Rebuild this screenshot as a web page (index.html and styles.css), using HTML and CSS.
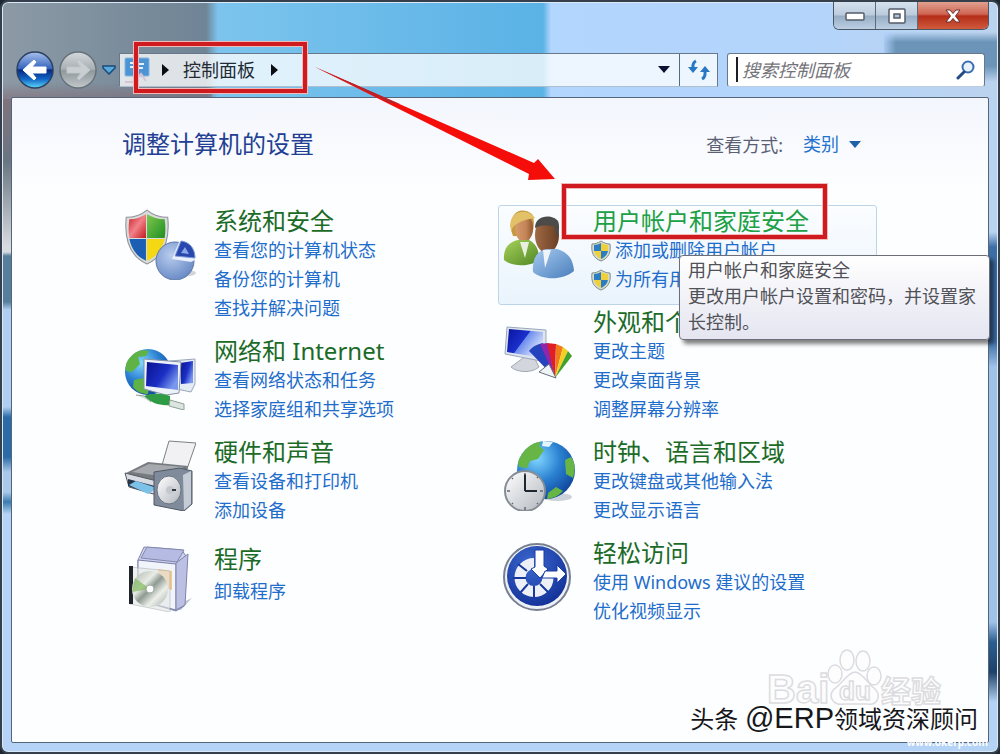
FILE: index.html
```html
<!DOCTYPE html>
<html lang="zh-CN">
<head>
<meta charset="utf-8">
<meta name="viewport" content="width=device-width, initial-scale=1">
<title>控制面板</title>
<link rel="stylesheet" href="styles.css">
</head>
<body>
<svg class="defs" aria-hidden="true">
  <defs>
    <linearGradient id="red" x1="0" y1="0" x2="1" y2="1"><stop offset="0" stop-color="#c51f25"/><stop offset=".5" stop-color="#f2828a"/><stop offset="1" stop-color="#c3161d"/></linearGradient>
    <linearGradient id="green" x1="0" y1="0" x2="1" y2="1"><stop offset="0" stop-color="#7fc84e"/><stop offset="1" stop-color="#1f8f23"/></linearGradient>
    <radialGradient id="globe" cx=".35" cy=".3" r=".8"><stop offset="0" stop-color="#7fd6ff"/><stop offset=".5" stop-color="#2a80d0"/><stop offset="1" stop-color="#0b3e96"/></radialGradient>
    <linearGradient id="screen" x1="0" y1="0" x2="1" y2=".6"><stop offset="0" stop-color="#0a14a0"/><stop offset=".5" stop-color="#1b30cc"/><stop offset=".52" stop-color="#6c8cec"/><stop offset="1" stop-color="#dfe9ff"/></linearGradient>
    <linearGradient id="screen-dark" x1="0" y1="0" x2="1" y2=".6"><stop offset="0" stop-color="#0a1290"/><stop offset=".6" stop-color="#1a2fc4"/><stop offset="1" stop-color="#7a97ee"/></linearGradient>
    <linearGradient id="metal" x1="0" y1="0" x2="1" y2="1"><stop offset="0" stop-color="#ffffff"/><stop offset="1" stop-color="#b2b7be"/></linearGradient>
    <radialGradient id="pie" cx=".4" cy=".35" r=".7"><stop offset="0" stop-color="#b9cdee"/><stop offset="1" stop-color="#6688c4"/></radialGradient>
    <linearGradient id="skin1" x1="0" y1="0" x2="1" y2="0"><stop offset="0" stop-color="#d79a6d"/><stop offset=".6" stop-color="#c48658"/><stop offset="1" stop-color="#905530"/></linearGradient>
    <linearGradient id="skin2" x1="0" y1="0" x2="1" y2="0"><stop offset="0" stop-color="#a06a45"/><stop offset="1" stop-color="#6a3e22"/></linearGradient>
    <linearGradient id="shirt1" x1="0" y1="0" x2="1" y2="1"><stop offset="0" stop-color="#a9d15a"/><stop offset="1" stop-color="#4e8724"/></linearGradient>
    <linearGradient id="shirt2" x1="0" y1="0" x2="1" y2="1"><stop offset="0" stop-color="#a5c9f0"/><stop offset="1" stop-color="#4a7ebb"/></linearGradient>
    <radialGradient id="access" cx=".4" cy=".3" r=".8"><stop offset="0" stop-color="#3d69d0"/><stop offset="1" stop-color="#0e2c93"/></radialGradient>
    <linearGradient id="back" x1="0" y1="0" x2="0" y2="1"><stop offset="0" stop-color="#a9c1ec"/><stop offset=".46" stop-color="#3564bd"/><stop offset=".5" stop-color="#07297f"/><stop offset=".75" stop-color="#1065c6"/><stop offset="1" stop-color="#5fd8fa"/></linearGradient>
    <linearGradient id="forward" x1="0" y1="0" x2="0" y2="1"><stop offset="0" stop-color="#d3d8db"/><stop offset=".48" stop-color="#a8afb3"/><stop offset=".52" stop-color="#8f989c"/><stop offset="1" stop-color="#c3c8ca"/></linearGradient>
    <linearGradient id="disc" x1="0" y1="0" x2="1" y2="1"><stop offset="0" stop-color="#a6b3a8"/><stop offset=".35" stop-color="#e8ece4"/><stop offset=".5" stop-color="#8e9a92"/><stop offset=".7" stop-color="#eef0ea"/><stop offset="1" stop-color="#9ea7a2"/></linearGradient>
    <symbol id="shield" viewBox="0 0 44 54">
      <path d="M22 1C16 6 9 8 2 8 0 28 4 45 22 53 40 45 44 28 42 8 35 8 28 6 22 1Z" fill="#d9dcdc" stroke="#8d9396"/>
      <path d="M21 5C16 8 11 10 5 10 4 17 4 22 5 28H21Z" fill="url(#red)"/>
      <path d="M22 5C27 8 33 10 39 10 40 17 40 22 39 28H22Z" fill="url(#green)"/>
      <path d="M5 29H21V50C11 45 7 38 5 29Z" fill="#1b5fb4"/>
      <path d="M22 29H39C37 38 32 46 22 50Z" fill="#f3d813"/>
    </symbol>
    <symbol id="uac" viewBox="0 0 20 22">
      <path d="M10 1C7 3 4 4 1 4 0 12 2 18 10 21 18 18 20 12 19 4 16 4 13 3 10 1Z" fill="#d6dcc8" stroke="#7f8c91"/>
      <path d="M10 3C8 4 5 5 3 5V11H10Z" fill="#2b7dc3"/><path d="M10 3C12 4 15 5 17 5V11H10Z" fill="#f0cf3d"/>
      <path d="M3 11H10V19C6 17 4 15 3 11Z" fill="#f0cf3d"/><path d="M10 11H17C16 15 14 17 10 19Z" fill="#2b7dc3"/>
    </symbol>
  </defs>
</svg>

<div class="window">
  <header class="titlebar">
    <div class="caption">
      <button class="cap" type="button" aria-label="最小化"><svg width="20" height="10" viewBox="0 0 20 10"><rect x="1" y="2" width="18" height="7" rx="1" fill="#fff" stroke="#535c6b" stroke-width="1.5"/></svg></button>
      <button class="cap" type="button" aria-label="最大化"><svg width="18" height="16" viewBox="0 0 18 16"><rect x="1" y="1" width="16" height="14" rx="1" fill="#fff" stroke="#535c6b" stroke-width="1.5"/><rect x="6" y="6" width="6" height="4" fill="#b2c3db" stroke="#535c6b" stroke-width="1.5"/></svg></button>
      <button class="cap cap-close" type="button" aria-label="关闭"><svg width="16" height="14" viewBox="0 0 16 14"><path d="M1 1H5L8 4.500 11 1H15L10.500 7 15 13H11L8 9.500 5 13H1L5.500 7Z" fill="#fff" stroke="#6b3131"/></svg></button>
    </div>
  </header>

  <div class="navbar">
    <div class="history">
      <button class="round" type="button" aria-label="后退"><svg width="38" height="38" viewBox="0 0 38 38"><circle cx="19" cy="19" r="18" fill="url(#back)" stroke="#2c405f" stroke-width="1.500"/><path d="M7 19 18 9 20 11 16 16H30V22H16L20 27 18 29Z" fill="#fff" stroke="#fff" stroke-linejoin="round"/></svg></button>
      <button class="round" type="button" aria-label="前进"><svg width="38" height="38" viewBox="0 0 38 38"><circle cx="19" cy="19" r="18" fill="url(#forward)" stroke="#66727b" stroke-width="1.500"/><path d="M31 19 20 9 18 11 22 16H8V22H22L18 27 20 29Z" fill="#c9ced0" stroke="#c0c6c9" stroke-linejoin="round"/></svg></button>
      <button class="recent" type="button" aria-label="最近的页面"><svg width="14" height="10" viewBox="0 0 14 10"><path d="M1 1H13V3L7 9 1 3Z" fill="#5aa9dc" stroke="#174c78" stroke-width="1.500"/></svg></button>
    </div>
    <nav class="address" aria-label="地址">
      <svg class="place" width="26" height="28" viewBox="0 0 26 28"><rect x="1" y="2" width="24" height="18" rx="1" fill="#4d94d4" stroke="#86b5de"/><path d="M6 7H10M6 11H11M14 8H20M14 12H19" stroke="#e4f2ff" stroke-width="2"/><path d="M1 26H10M12 24 17 18 22 25" stroke="#d4c4d4" stroke-width="2" fill="none"/></svg>
      <svg width="7" height="12" viewBox="0 0 7 12"><path d="M0 0 7 6 0 12Z" fill="#0b0d12"/></svg>
      <a class="crumb" href="#">控制面板</a>
      <svg class="crumb-next" width="7" height="12" viewBox="0 0 7 12"><path d="M0 0 7 6 0 12Z" fill="#0b0d12"/></svg>
      <button class="drop" type="button" aria-label="以前的位置"><svg width="12" height="7" viewBox="0 0 12 7"><path d="M0 0H12L6 7Z" fill="#0c1230"/></svg></button>
      <button class="refresh" type="button" aria-label="刷新"><svg width="22" height="22" viewBox="0 0 22 22"><path d="M8 2C4 4 5 7 5 9M14 20C18 18 17 15 17 12" fill="none" stroke="#2678c4" stroke-width="3"/><path d="M0 8H10L5 14ZM12 13H22L17 7Z" fill="#2678c4"/></svg></button>
    </nav>
    <label class="search">
      <span class="caret"></span>
      <input class="search-input" type="text" placeholder="搜索控制面板" aria-label="搜索控制面板">
      <svg width="20" height="20" viewBox="0 0 20 20"><circle cx="12" cy="7" r="5.500" fill="#e7f1fc" stroke="#3a6db0" stroke-width="2"/><path d="M8 12 2 18" stroke="#244a84" stroke-width="3" stroke-linecap="round"/></svg>
    </label>
  </div>

  <main class="panel">
    <div class="heading">
      <h1 class="title">调整计算机的设置</h1>
      <div class="view">
        <label class="view-label" for="view">查看方式:</label>
        <span class="view-pick"><select class="view-select" id="view"><option>类别</option></select><svg width="12" height="7" viewBox="0 0 12 7"><path d="M0 0H12L6 7Z" fill="#1d62a8"/></svg></span>
      </div>
    </div>

    <div class="columns">
      <div class="column">
        <section class="category">
          <svg class="icon" viewBox="0 0 72 74"><ellipse cx="55" cy="67" rx="17" ry="4" fill="#d0d5dc"/><use href="#shield" x="0" y="3" width="46" height="56"/><circle cx="51" cy="55" r="19" fill="url(#pie)" stroke="#5d77a6"/><path d="M48 53 55 36C64 36 71 44 71 54L67 56Z" fill="#e9effb"/><path d="M51 50 57 35C66 36 71 43 71 52Z" fill="#2848ad" stroke="#7d98dc"/><path d="M57 47 61 41 65 48Z" fill="#8ba7e5"/></svg>
          <div class="text">
            <h2 class="name"><a class="name-link" href="#">系统和安全</a></h2>
            <a class="task" href="#">查看您的计算机状态</a>
            <a class="task" href="#">备份您的计算机</a>
            <a class="task" href="#">查找并解决问题</a>
          </div>
        </section>
        <section class="category">
          <svg class="icon" viewBox="0 0 72 74"><circle cx="24" cy="36" r="23" fill="url(#globe)"/><path d="M4 24C11 15 17 13 25 15L22 20 14 21 16 28 8 36 2 35C1 31 2 27 4 24ZM10 44 20 42 25 51 24 58C18 58 13 56 9 51Z" fill="#5fb345"/><path d="M46 25 71 23V48L67 56 48 52Z" fill="#e4ebf5" stroke="#9ba7b8"/><path d="M56 27 69 25V47L57 48Z" fill="url(#screen-dark)"/><path d="M20 23 57 26 55 57 42 59 20 53Z" fill="#edf2f8" stroke="#8492a7"/><path d="M23 26 54 29V54L22 50Z" fill="url(#screen-dark)"/><path d="M20 60C27 57 38 57 46 60V69C36 70 27 67 20 60Z" fill="#2f9c45"/><path d="M12 59 20 60 27 66M46 64 60 68V74L45 70Z" fill="#dce5e0" stroke="#8da195"/></svg>
          <div class="text">
            <h2 class="name"><a class="name-link" href="#">网络和 Internet</a></h2>
            <a class="task" href="#">查看网络状态和任务</a>
            <a class="task" href="#">选择家庭组和共享选项</a>
          </div>
        </section>
        <section class="category">
          <svg class="icon" viewBox="0 0 72 74"><path d="M45 4 72 6 63 32 38 28Z" fill="#f1f1f4" stroke="#7c8086"/><path d="M2 36 24 25 64 29 61 42 31 48Z" fill="#777b80"/><path d="M8 35 25 27 60 30 36 39Z" fill="#a6aaae"/><path d="M1 36 33 44V58L5 50Z" fill="#d9dde3" stroke="#515961"/><path d="M4 42 31 49 24 56 4 49Z" fill="#26364a"/><path d="M5 48 12 44 33 51 24 57Z" fill="#7cc1e8"/><path d="M30 35 56 31 68 34V67L60 74 30 68Z" fill="#7f8a9b" stroke="#505968"/><path d="M59 38 67 34V67L60 73Z" fill="#c6ccd6"/><ellipse cx="45" cy="53" rx="12" ry="14" fill="url(#metal)" stroke="#6a7380"/><circle cx="46" cy="53" r="4" fill="#c3c8ce"/><path d="M48 53 52 53" stroke="#303840" stroke-width="2"/></svg>
          <div class="text">
            <h2 class="name"><a class="name-link" href="#">硬件和声音</a></h2>
            <a class="task" href="#">查看设备和打印机</a>
            <a class="task" href="#">添加设备</a>
          </div>
        </section>
        <section class="category">
          <svg class="icon" viewBox="0 0 72 74"><path d="M46 70 68 60 57 72Z" fill="#c4c8d1"/><path d="M14 22 20 9 58 12 63 20 60 68 52 73 14 62Z" fill="#cdd1ef" stroke="#8488ac"/><path d="M14 22 52 26V72L14 62Z" fill="#f2f4fc" stroke="#777da6"/><path d="M23 9 60 12 53 24 17 20Z" fill="#b5bbe2" stroke="#8287ad"/><path d="M52 25 64 16 61 67 52 72Z" fill="#bcc1e4" stroke="#7e84ae"/><path d="M34 31 48 33V52L35 49Z" fill="#f5c78c"/><path d="M6 29 46 33V74L6 66Z" fill="#e4e9e6" opacity=".6" stroke="#adb5b3"/><path d="M5 28H9V66H5Z" fill="#20242a"/><circle cx="26" cy="51" r="18" fill="url(#disc)"/><path d="M11 40 26 51 8 54Z" fill="#83ba5f" opacity=".7"/><circle cx="26" cy="51" r="4" fill="#fff" stroke="#9caba2"/></svg>
          <div class="text text-single">
            <h2 class="name"><a class="name-link" href="#">程序</a></h2>
            <a class="task" href="#">卸载程序</a>
          </div>
        </section>
      </div>

      <div class="column">
        <section class="category category-hover">
          <svg class="icon" viewBox="0 0 72 74"><path d="M8 24C6 6 18 0 29 8 32 12 31 26 28 31L10 30Z" fill="#c49a3c"/><ellipse cx="21" cy="22" rx="9" ry="14" fill="url(#skin1)"/><path d="M9 27C7 20 17 14 32 12 28 4 8 1 7 20Z" fill="#e2c168"/><path d="M1 54C0 42 6 36 15 34H26C33 38 36 43 36 54 27 61 9 61 1 54Z" fill="url(#shirt1)"/><path d="M17 36 22 52 26 36Z" fill="#e8efdf"/><ellipse cx="44" cy="29" rx="12" ry="18" fill="url(#skin2)"/><path d="M32 22C32 8 50 8 55 15 57 20 56 27 54 31L51 20C46 20 39 18 32 22Z" fill="#4c4b4a"/><path d="M30 66C29 51 35 45 43 43H54C64 46 70 52 71 65 59 75 39 74 30 66Z" fill="url(#shirt2)"/><path d="M40 44 42 62 48 44Z" fill="#eef4fa"/></svg>
          <div class="text">
            <h2 class="name"><a class="name-link name-link-hot" href="#">用户帐户和家庭安全</a></h2>
            <a class="task" href="#"><svg class="uac" width="20" height="22"><use href="#uac"/></svg>添加或删除用户帐户</a>
            <a class="task" href="#"><svg class="uac" width="20" height="22"><use href="#uac"/></svg>为所有用户</a>
          </div>
        </section>
        <section class="category">
          <svg class="icon" viewBox="0 0 72 74"><path d="M24 48 32 52 36 60C28 67 13 65 8 60Z" fill="#d3d6dc" stroke="#a4a9b2"/><path d="M4 20 43 23V55L2 47Z" fill="#dfe5ec" stroke="#9aa7bb"/><path d="M6 22 40 25V51L4 45Z" fill="url(#screen)"/><path d="M52 71 26 44C30 39 35 37 40 36Z" fill="#2443bd"/><path d="M52 71 37 37 45 36Z" fill="#8e26ae"/><path d="M52 71 44 36 53 37Z" fill="#df1e26"/><path d="M52 71 53 37 60 40Z" fill="#f07b1c"/><path d="M52 71 60 40 65 44Z" fill="#f2cf21"/><path d="M52 71 65 44 69 49Z" fill="#43a02d"/><path d="M36 65 46 57 53 71Z" fill="#f1f4f7" stroke="#66717c"/></svg>
          <div class="text">
            <h2 class="name"><a class="name-link" href="#">外观和个性化</a></h2>
            <a class="task" href="#">更改主题</a>
            <a class="task" href="#">更改桌面背景</a>
            <a class="task" href="#">调整屏幕分辨率</a>
          </div>
        </section>
        <section class="category">
          <svg class="icon" viewBox="0 0 72 74"><ellipse cx="54" cy="60" rx="15" ry="4" fill="#ccd2da"/><circle cx="43" cy="33" r="29" fill="url(#globe)"/><path d="M15 25C20 12 29 5 38 5L36 9 41 13 35 22 27 24 24 31 16 30ZM62 23 68 20C73 27 72 34 70 41L63 37ZM45 56 53 50 60 54C54 60 50 61 44 62Z" fill="#66b545"/><path d="M40 4 50 5 46 10 39 9Z" fill="#e5f5fd"/><circle cx="22" cy="54" r="20" fill="url(#metal)" stroke="#858d96" stroke-width="2"/><path d="M22 54V37M22 54H34" stroke="#1e2731" stroke-width="2"/><path d="M22 36V38M22 70V73M4 54H7M37 54H40M9 41 10 42M34 41 35 40M9 67 10 66M34 66 35 67" stroke="#606a75" stroke-width="1.500"/></svg>
          <div class="text">
            <h2 class="name"><a class="name-link" href="#">时钟、语言和区域</a></h2>
            <a class="task" href="#">更改键盘或其他输入法</a>
            <a class="task" href="#">更改显示语言</a>
          </div>
        </section>
        <section class="category">
          <svg class="icon" viewBox="0 0 72 74"><circle cx="34" cy="39" r="33" fill="#edf0f5" stroke="#777f91" stroke-width="2"/><circle cx="34" cy="38" r="30" fill="url(#access)"/><path d="M31 25.500A14 14 0 1 0 45 40" fill="none" stroke="#edf1f7" stroke-width="11"/><path d="M24 33 15 26M23 40H10M25 46 17 55M31 48V60M37 46 46 55" stroke="#17389e" stroke-width="2"/><path d="M32 12H41V28L45 31 37 40 28 31 32 29Z" fill="#fff" stroke="#1a3da4"/><path d="M42 33H54V27L63 36 54 45V40H39Z" fill="#fff" stroke="#1a3da4"/></svg>
          <div class="text">
            <h2 class="name"><a class="name-link" href="#">轻松访问</a></h2>
            <a class="task" href="#">使用 Windows 建议的设置</a>
            <a class="task" href="#">优化视频显示</a>
          </div>
        </section>
      </div>
    </div>
  </main>

  <div class="tooltip" role="tooltip">用户帐户和家庭安全<br>更改用户帐户设置和密码，并设置家长控制。</div>

  <svg class="marks" width="1000" height="260" viewBox="0 0 1000 260" aria-hidden="true">
    <g fill="none" stroke="#f2b9b9" stroke-width="6"><path d="M136 44H305V91H136Z"/><path d="M564 186H825V237H564Z"/></g>
    <g fill="none" stroke="#cf1b20" stroke-width="4"><path d="M136 44H305V91H136Z"/><path d="M564 186H825V237H564Z"/></g>
    <path d="M315 67 534 163 538 159 555 179 528 180 529 174Z" fill="#f50d0a"/>
    <path d="M315 67 400 104 390 103Z" fill="#b5252b"/>
  </svg>

  <svg class="baidu" width="176" height="66" viewBox="0 0 176 66" role="img" aria-label="Baidu 经验">
    <g fill="#fdfdfd" stroke="#dcdce0" stroke-width="1.500">
      <text class="baidu-text" x="0" y="58">Bai</text>
      <ellipse cx="68" cy="29" rx="7" ry="9"/><ellipse cx="80" cy="15" rx="7" ry="10"/><ellipse cx="96" cy="16" rx="7" ry="10"/><ellipse cx="107" cy="31" rx="7" ry="9"/>
      <path d="M88 27C80 28 75 39 67 44 60 52 67 61 77 59H100C110 61 115 51 108 44 101 39 96 28 88 27Z"/>
      <text class="baidu-small" x="72" y="55">du</text>
      <text class="baidu-cjk" x="114" y="57">经验</text>
    </g>
  </svg>
  <p class="byline">头条 <span class="byline-latin">@ERP</span>领域资深顾问</p>
  <p class="site">www.okerp.com</p>
</div>
</body>
</html>
```
FILE: styles.css
```css
* { box-sizing: border-box; }

body {
  margin: 0;
  background: #1c2733;
  font-family: "Noto Sans", "Noto Sans CJK SC", sans-serif;
  font-size: 18px;
  color: #4c4c55;
}

button {
  margin: 0;
  padding: 0;
  border: 0;
  background: none;
  display: grid;
  place-items: center;
}

a { text-decoration: none; }
svg { display: block; flex: none; }
.defs { position: absolute; width: 0; height: 0; }

.window {
  position: relative;
  display: flex;
  flex-direction: column;
  min-height: 100vh;
  padding: 0 9px 9px;
  border: 2px solid #35404c;
  border-radius: 8px;
  box-shadow: inset 0 0 0 1px #dbe8f5;
  background:
    linear-gradient(90deg, #b3d3fa, #b3d3fa00 14px) 100% 30px / 116px 50px no-repeat,
    linear-gradient(#6f97bb00, #6b94b8 10px 34px, #6f97bb00) 100% 30px / 114px 50px no-repeat,
    linear-gradient(#80687300 80px, #80687380 94px, #80687380 97px) 0 0 / 210px 97px no-repeat,
    linear-gradient(90deg, #8c9aa6, #6f8495 204px, #7cc4ee 216px, #5ab2e5 541px, #b3d6fe 549px, #b3d4fb 80%, #bcd3ee) 0 0 / 100% 97px no-repeat,
    linear-gradient(#b9d4f2 230px, #3e6ea6 245px 340px, #9fc2e8 365px 620px, #2c5d91 640px, #1e4168 670px, #b4d2f3 700px) 100% 0 / 20px 100% no-repeat,
    linear-gradient(#80737c 97px, #6a7682 160px, #d9dcdf 245px, #d9dcdf 250px, #577f9c 254px 300px, #afcff2 308px 405px, #2b6ba8 415px 455px, #a9c9ea 470px 490px, #3a7cb0 500px, #b4d3f7 512px);
}

.titlebar {
  display: flex;
  justify-content: flex-end;
  height: 49px;
}

.caption {
  display: flex;
  height: 28px;
  border: 1px solid #4b5866;
  border-top: 0;
  border-radius: 0 0 6px 6px;
  overflow: hidden;
}

.cap {
  width: 42px;
  border-right: 1px solid #5c6b7c;
  background: linear-gradient(#d5e1ee, #bccbdc 48%, #97adc4 52%, #bccfe3);
}

.cap-close {
  width: 70px;
  border-right: 0;
  background: linear-gradient(#e0a08f, #cf6553 45%, #b42d18 52%, #d05a3c);
}

.navbar {
  display: flex;
  align-items: center;
  height: 37px;
  margin: 0 4px 9px 5px;
}

.history { display: flex; align-items: center; width: 103px; flex: none; }
.round { width: 38px; height: 38px; margin-right: 5px; }
.recent { width: 14px; height: 20px; }

.address {
  flex: 1;
  display: flex;
  align-items: center;
  gap: 12px;
  height: 34px;
  padding-left: 4px;
  border: 1px solid #66788a;
  border-bottom-color: #adbfce;
  background: #ffffffc4;
}

.crumb { margin-left: 2px; color: #222a35; line-height: 28px; }
.crumb-next { margin-left: 4px; }
.drop { margin-left: auto; width: 14px; height: 32px; }

.refresh {
  width: 38px;
  height: 32px;
  border-left: 1px solid #536c86;
  margin-left: -4px;
}

.search {
  flex: 0 0 258px;
  min-width: 0;
  display: flex;
  align-items: center;
  height: 34px;
  margin-left: 9px;
  padding: 0 8px;
  border: 1px solid #66788a;
  border-radius: 3px;
  border-bottom-color: #bccddd;
  background: #ffffff;
}

.caret { flex: none; width: 2px; height: 25px; background: #1b1e24; }

.search-input {
  flex: 1;
  width: 0;
  min-width: 0;
  padding: 0 4px;
  border: 0;
  outline: 0;
  background: none;
  font: inherit;
}

.search-input::placeholder { color: #74747a; font-style: italic; opacity: 1; }

.panel {
  flex: 1;
  padding: 30px 111px 60px 107px;
  border: 1px solid #55657a;
  border-radius: 2px;
  background: linear-gradient(#f3f6fd, #fdfeff 90px);
}

.heading {
  display: flex;
  justify-content: space-between;
  align-items: center;
  height: 32px;
  margin-bottom: 45px;
  padding: 0 16px 0 3px;
}

.title { margin: 0; font-size: 24px; font-weight: 400; line-height: 32px; color: #223f93; }
.view { display: flex; align-items: center; gap: 20px; color: #5b5f74; }
.view-pick { display: flex; align-items: center; gap: 10px; }

.view-select {
  appearance: none;
  padding: 0;
  border: 0;
  background: none;
  font: inherit;
  color: #1f72cf;
}

.columns { display: grid; grid-template-columns: repeat(2, minmax(0, 1fr)); }
.column { display: flex; flex-direction: column; gap: 1px; }

.category {
  display: flex;
  gap: 18px;
  padding: 0 4px 10px;
  border: 1px solid transparent;
  border-radius: 3px;
}

.category-hover {
  border-color: #bcd5e8;
  background: linear-gradient(#fbfdff, #eaf4fd);
}

.icon { width: 72px; height: 74px; }
.text { min-width: 0; white-space: nowrap; }
.text-single { display: grid; align-content: start; gap: 3px; padding-top: 6px; }
.name { margin: 0; font-size: 24px; font-weight: 400; line-height: 30px; }
.name-link { color: #1b6b27; }
.name-link-hot { color: #20a044; text-decoration: underline; text-decoration-thickness: 2px; text-underline-offset: 4px; }
.task { display: flex; align-items: center; gap: 4px; height: 29px; line-height: 29px; color: #1e6dcb; }
.uac { margin-left: -2px; }

.tooltip {
  position: absolute;
  top: 253px;
  left: 677px;
  width: 311px;
  padding: 1px 8px 4px;
  border: 1px solid #6d6f78;
  border-radius: 4px;
  background: linear-gradient(#ffffff, #e4e5f0);
  box-shadow: 4px 4px 4px #00000080;
  line-height: 26px;
  color: #515158;
}

.marks { position: absolute; top: -2px; left: -2px; pointer-events: none; }

.baidu { position: absolute; right: 55px; bottom: 41px; }
.baidu-text { font: 700 40px "Liberation Sans", sans-serif; }
.baidu-small { font: 700 26px "Liberation Sans", sans-serif; }
.baidu-cjk { font: 700 30px "Noto Sans CJK SC", sans-serif; }

.byline {
  position: absolute;
  right: 20px;
  bottom: 14px;
  margin: 0;
  font-family: "Liberation Sans", "Noto Sans CJK SC", sans-serif;
  font-size: 24px;
  line-height: 36px;
  color: #15171a;
  text-shadow: 1px 1px 0 #ffffff;
}

.byline-latin { font-size: 29px; }

.site {
  position: absolute;
  right: 10px;
  bottom: 4px;
  margin: 0;
  font-size: 10px;
  line-height: 12px;
  font-weight: 700;
  color: #ffffff;
}
```
